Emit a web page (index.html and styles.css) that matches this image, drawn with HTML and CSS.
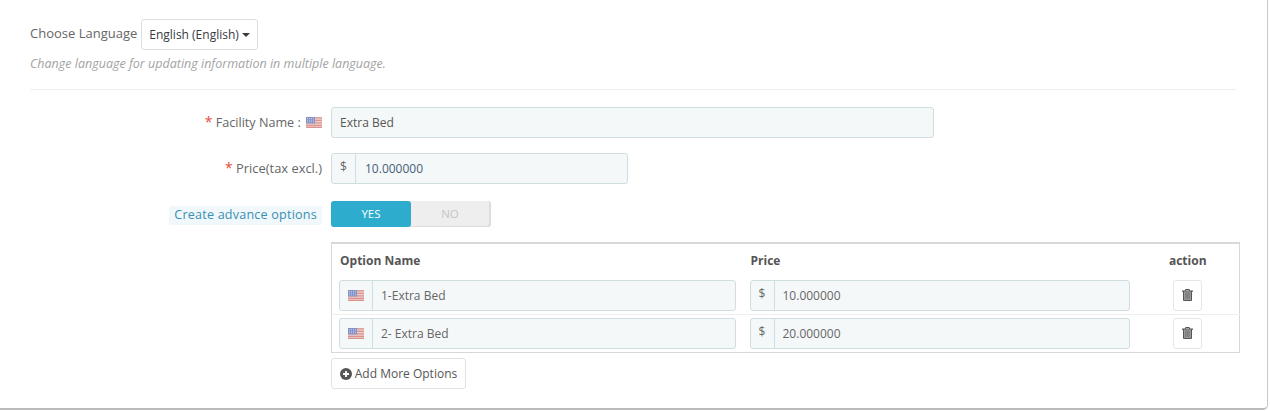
FILE: index.html
```html
<!DOCTYPE html>
<html lang="en">
<head>
<meta charset="utf-8">
<title>Facility</title>
<link rel="stylesheet" href="styles.css">
</head>
<body>
<svg class="defs" width="0" height="0" aria-hidden="true">
  <symbol id="flag" viewBox="0 0 16 11">
    <rect width="16" height="11" fill="#ecc9c6"/>
    <path d="M0 .8h16M0 3.300h16M0 5.800h16M0 8.300h16M0 10.400h16" stroke="#d5837c" stroke-width="1.200"/>
    <rect width="9" height="6.400" fill="#6f80c0"/>
    <path d="M1 1.500h7M1 3.200h7M1 4.900h7" stroke="#c9d0ea" stroke-width=".8" stroke-dasharray="1 1"/>
  </symbol>
  <symbol id="trash" viewBox="0 0 11 12">
    <path fill="#555" fill-rule="evenodd" d="M3.600 0h3.800l.7 1.500H11v1.200h-1V11a1 1 0 0 1-1 1H2a1 1 0 0 1-1-1V2.700H0V1.500h2.900zM4.100 1 3.900 1.500h3.200L6.900 1zM2.200 2.700V10.800h6.600V2.700z"/>
    <path fill="#8a8a8a" d="M2.200 2.700h6.600v8.100H2.200z"/>
    <path stroke="#777" stroke-width=".6" d="M4 4v5.500M5.500 4v5.500M7 4v5.500"/>
  </symbol>
</svg>
<main class="panel">
  <div class="lang-row">
    <span class="lang-label">Choose Language</span>
    <button class="btn lang-btn" type="button">English (English)<span class="caret"></span></button>
  </div>
  <p class="help">Change language for updating information in multiple language.</p>
  <hr class="divider">

  <div class="form-row row-name">
    <label class="label"><span class="req">*</span> Facility Name : <svg class="flag label-flag"><use href="#flag"/></svg></label>
    <div class="input name-input"><span class="value">Extra Bed</span></div>
  </div>

  <div class="form-row row-price">
    <label class="label"><span class="req">*</span> Price(tax excl.)</label>
    <div class="input price-input"><span class="addon">$</span><span class="value">10.000000</span></div>
  </div>

  <div class="form-row row-switch">
    <label class="label"><span class="hint">Create advance options</span></label>
    <div class="switch"><span class="sw-yes">YES</span><span class="sw-no">NO</span></div>
  </div>

  <div class="options">
    <table class="opt-table">
      <thead>
        <tr><th class="col-name">Option Name</th><th class="col-price">Price</th><th class="col-action">action</th></tr>
      </thead>
      <tbody>
        <tr>
          <td class="cell-name"><div class="input"><span class="addon addon-flag"><svg class="flag"><use href="#flag"/></svg></span><span class="value">1-Extra Bed</span></div></td>
          <td class="cell-price"><div class="input"><span class="addon">$</span><span class="value">10.000000</span></div></td>
          <td class="cell-action"><button class="btn del-btn" type="button" aria-label="Delete"><svg class="trash"><use href="#trash"/></svg></button></td>
        </tr>
        <tr>
          <td class="cell-name"><div class="input"><span class="addon addon-flag"><svg class="flag"><use href="#flag"/></svg></span><span class="value">2- Extra Bed</span></div></td>
          <td class="cell-price"><div class="input"><span class="addon">$</span><span class="value">20.000000</span></div></td>
          <td class="cell-action"><button class="btn del-btn" type="button" aria-label="Delete"><svg class="trash"><use href="#trash"/></svg></button></td>
        </tr>
      </tbody>
    </table>
    <button class="btn add-btn" type="button">
      <svg class="plus" viewBox="0 0 12 12"><circle cx="6" cy="6" r="6" fill="#555"/><path d="M6 3v6M3 6h6" stroke="#fff" stroke-width="1.800"/></svg>Add More Options
    </button>
  </div>
</main>
</body>
</html>
```
FILE: styles.css
```css
* { box-sizing: border-box; }
html, body { margin: 0; height: 411px; overflow: hidden; background: #fff; }
body { font-family: "Open Sans", "Liberation Sans", sans-serif; font-size: 12px; color: #555; }
.defs { display: block; height: 0; }

.panel {
  width: 1268px;
  height: 410px;
  padding: 19px 30px 0;
  background: #fff;
  border-right: 1px solid #c9c9c9;
  border-bottom: 2px solid #bbb;
  border-bottom-right-radius: 5px;
}

.lang-row { display: flex; align-items: center; height: 31px; gap: 4px; }
.lang-label { color: #666; font-size: 13px; position: relative; top: -2px; }

.btn {
  font: inherit;
  color: #363a41;
  background: #fff;
  border: 1px solid #dcdfe2;
  border-radius: 3px;
  padding: 0;
}
.lang-btn { width: 117px; height: 31px; padding-left: 7px; display: flex; align-items: center; white-space: nowrap; }
.caret {
  margin-left: 3px;
  width: 0;
  height: 0;
  border-left: 4px solid transparent;
  border-right: 4px solid transparent;
  border-top: 4px solid #363a41;
}

.help { margin: 5px 0 0; height: 17px; line-height: 17px; font-size: 12.500px; font-style: italic; color: #a3a3a3; }
.divider { margin: 17px 1px 0 0; border: 0; border-top: 1px solid #eee; }

.form-row { display: flex; align-items: center; }
.label {
  width: 301px;
  padding-right: 9px;
  text-align: right;
  color: #666;
  font-size: 12.600px;
  white-space: nowrap;
  position: relative;
  top: -1px;
}
.req { color: #e74c3c; font-size: 14px; }
.flag { width: 16px; height: 11px; vertical-align: -1px; filter: blur(.6px); opacity: .85; }
.label-flag { margin-left: 2px; }

.row-name { margin-top: 17px; height: 31px; }
.row-price { margin-top: 15px; height: 31px; }
.row-price .label { font-size: 12.900px; padding-right: 9px; }
.row-switch { margin-top: 17px; height: 26px; }
.row-switch .label { top: 1px; }

.input {
  display: flex;
  align-items: stretch;
  height: 31px;
  background: #f5f8f9;
  border: 1px solid #d0dde1;
  border-radius: 3px;
  color: #555;
  line-height: 29px;
}
.value { padding-left: 8px; white-space: nowrap; }
.addon { width: 24px; flex: none; text-align: center; border-right: 1px solid #d0dde1; font-size: 12px; line-height: 26px; color: #666; }
.addon-flag { width: 33px; display: flex; align-items: center; justify-content: center; }
.name-input { width: 603px; }
.price-input { width: 297px; }
.price-input .value { color: #44607a; padding-left: 9px; }
.opt-table .value { color: #666; }

.hint {
  display: inline-block;
  height: 19px;
  line-height: 18px;
  padding: 0 5px;
  color: #3b8eb3;
  background: #f0f8fb;
  border-radius: 2px;
  letter-spacing: .2px;
}

.switch {
  width: 160px;
  height: 26px;
  display: flex;
  border-radius: 3px;
  background: #eee;
  box-shadow: inset -2px -1px 0 #dcdcdc;
  line-height: 26px;
  text-align: center;
  font-size: 11.500px;
}
.sw-yes { width: 80px; background: #2eacce; color: #fff; border-radius: 3px; }
.sw-no { width: 78px; color: #c5c5c5; }

.options { margin: 15px 0 0 301px; }
.opt-table {
  width: 909px;
  height: 111px;
  table-layout: fixed;
  border-collapse: collapse;
  border: 1px solid #d8d8d8;
  border-top-width: 2px;
}
.opt-table th {
  height: 34px;
  padding: 0;
  font-size: 12px;
  font-weight: 700;
  text-align: left;
  color: #555;
}
.opt-table td { padding: 0; height: 37px; }
.opt-table tbody tr + tr td { height: 38px; border-top: 1px solid #eee; }
.col-name { width: 411px; padding-left: 8px !important; }
.col-price { width: 403px; padding-left: 8px !important; }
.col-action { text-align: center !important; padding-right: 9px !important; }
.cell-name { padding-left: 7px !important; }
.cell-name .input { width: 397px; }
.cell-price { padding-left: 7px !important; }
.cell-price .input { width: 380px; }
.cell-action { text-align: center; padding-right: 9px !important; }

.del-btn { width: 29px; height: 31px; display: inline-flex; align-items: center; justify-content: center; border-color: #e4e6e8; vertical-align: middle; }
.trash { width: 11px; height: 12px; }

.add-btn {
  margin-top: 5px;
  width: 135px;
  height: 31px;
  display: flex;
  align-items: center;
  justify-content: center;
  gap: 3px;
  color: #555;
  border-color: #e0e2e4;
}
.plus { width: 12px; height: 12px; flex: none; }
```
